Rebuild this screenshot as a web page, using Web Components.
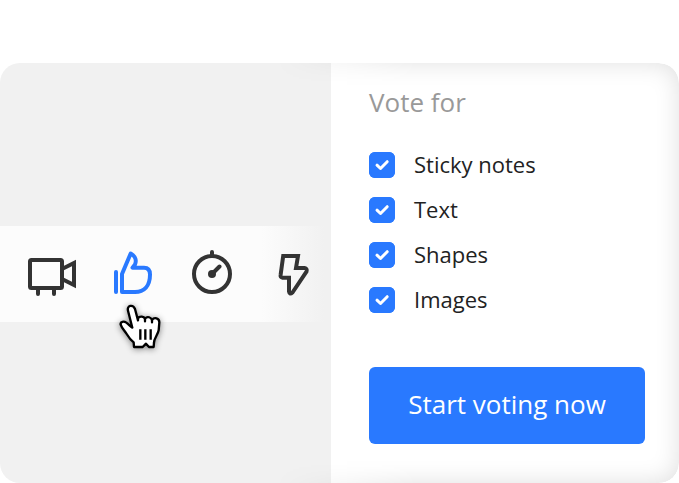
<!DOCTYPE html>
<html lang="en">
<head>
<meta charset="utf-8">
<title>Start voting</title>
<style>
body { margin: 0; background: #fff; font-family: "Open Sans", "Noto Sans", sans-serif; color: #222; }
</style>
</head>
<body>
<voting-card>
  <tool-bar slot="canvas">
    <tool-button label="Video chat">
      <svg viewBox="0 0 56 56"><rect x="6" y="14" width="32" height="28" rx="1.5"/><path d="M14 43v5M30 43v5" stroke-linecap="round"/><path d="M39 22.500L50 17V39L39 33.500"/></svg>
    </tool-button>
    <tool-button label="Voting" active>
      <svg viewBox="0 0 56 56"><path d="M12 26V46" stroke-linecap="round"/><path d="M18 46V28L26.700 7.500C32 10.500 32.500 15 31 18.500L28.500 21.700H40Q46 21.700 46 28.500C46 40 40 46 31 46Z" stroke-linejoin="round"/></svg>
      <hand-cursor slot="overlay"></hand-cursor>
    </tool-button>
    <tool-button label="Timer">
      <svg viewBox="0 0 56 56"><circle cx="28" cy="28" r="18"/><path d="M28 10V6M28 28L35.500 20.500" stroke-linecap="round"/><circle cx="28" cy="28" r="4" fill="currentColor" stroke="none"/></svg>
    </tool-button>
    <tool-button label="Quick actions">
      <svg viewBox="0 0 56 56"><path d="M19.200 10H34L32 22H40.500Q43.500 22.500 42.500 25.500L28.500 46.500Q25.500 49 25 45.500V31.700H18.500Q16.200 31.500 16.600 29Z"/></svg>
    </tool-button>
  </tool-bar>
  <vote-form slot="panel">
    <span slot="title">Vote for</span>
    <vote-option>Sticky notes</vote-option>
    <vote-option>Text</vote-option>
    <vote-option>Shapes</vote-option>
    <vote-option>Images</vote-option>
    <span slot="action">Start voting now</span>
  </vote-form>
</voting-card>
<script>
function define(name, html, setup) {
  const template = document.createElement("template");
  template.innerHTML = html;
  customElements.define(name, class extends HTMLElement {
    constructor() {
      super();
      this.attachShadow({ mode: "open" }).append(template.content.cloneNode(true));
    }
    connectedCallback() { if (setup) setup(this, this.shadowRoot); }
  });
}

define("voting-card", `
<style>
:host { display: block; padding-top: 63px; }
main { display: grid; grid-template-columns: 331fr 348fr; min-height: calc(100vh - 63px); border-radius: 20px; overflow: hidden; position: relative; }
.canvas { background: #f1f1f1; display: flex; flex-direction: column; justify-content: center; padding-top: 2px; min-width: 0; }
.panel { background: #fff; min-width: 0; }
/* soft inner shade round the panel's outer edge */
main::after { content: ""; position: absolute; inset: 0 0 0 30%; border-radius: 0 20px 20px 0; pointer-events: none;
  box-shadow: inset 0 0 24px rgba(0,0,0,.13);
  -webkit-mask-image: linear-gradient(90deg, transparent 15%, #000 45%); mask-image: linear-gradient(90deg, transparent 15%, #000 45%); }
</style>
<main><section class="canvas"><slot name="canvas"></slot></section><section class="panel"><slot name="panel"></slot></section></main>`);

define("tool-bar", `
<style>
:host { display: flex; padding-left: 12px; background: linear-gradient(90deg, #fcfcfc 79%, #f1f1f1 98%); }
</style>
<slot></slot>`);

define("tool-button", `
<style>
:host { display: block; position: relative; flex: 0 0 80px; color: #333; }
:host([active]) { color: #2979ff; z-index: 1; }
button { display: flex; align-items: center; justify-content: center; width: 100%; height: 96px; padding: 0; border: 0; background: none; color: inherit; cursor: pointer; }
::slotted(svg) { width: 56px; height: 56px; fill: none; stroke: currentColor; stroke-width: 4; flex: none; }
</style>
<button type="button"><slot></slot></button><slot name="overlay"></slot>`,
(host, root) => root.querySelector("button").setAttribute("aria-label", host.getAttribute("label")));

define("hand-cursor", `
<style>
:host { position: absolute; left: 13px; top: 64px; pointer-events: none; }
svg { display: block; width: 70px; height: 70px; overflow: visible; filter: drop-shadow(0 1px 3px rgba(0,0,0,.45)); }
</style>
<svg viewBox="0 0 210 210" fill="#fff" stroke="#000" stroke-width="7" stroke-linejoin="round" stroke-linecap="round" aria-hidden="true">
<path d="M87 171L86 157C78 151 71 142 65 132C59 122 50 114 47 104C45 94 57 93 64 98C71 103 77 111 82 113L69 62C65 46 84 42 90 57L99 91V85C104 77 118 78 120 88V94V86C127 77 139 82 141 91V97V90C148 80 163 84 163 97L161 121C158 136 147 145 147 158L146 171H132L123 161L113 171Z"/>
<path d="M106 118V149M121 118V149M137 118V149" stroke-linecap="butt"/>
</svg>`);

define("vote-form", `
<style>
:host { display: block; padding: 21px 34px 39px 38px; }
form { display: flex; flex-direction: column; }
h2 { margin: 0; font-size: 26px; line-height: 36px; font-weight: 400; color: #999; }
.options { display: flex; flex-direction: column; gap: 9px; margin: 27px 0 49px; }
button { height: 77px; padding: 0 16px 3px; border: 0; border-radius: 6px; background: #2979ff; color: #fff; font: inherit; font-size: 26px; cursor: pointer; }
</style>
<form>
<h2><slot name="title"></slot></h2>
<div class="options"><slot></slot></div>
<button type="button"><slot name="action"></slot></button>
</form>`);

define("vote-option", `
<style>
:host { display: block; }
label { display: flex; align-items: center; gap: 19px; height: 36px; font-size: 22px; line-height: 34px; color: #222; cursor: pointer; }
.text { padding-bottom: 2px; }
.box { display: grid; flex: none; width: 26px; height: 26px; }
.box > * { grid-area: 1 / 1; }
input { appearance: none; -webkit-appearance: none; width: 26px; height: 26px; margin: 0; border-radius: 6px; background: #fff; box-shadow: inset 0 0 0 2px #2979ff; cursor: pointer; }
input:checked { background: #2979ff; }
svg { width: 26px; height: 26px; pointer-events: none; fill: none; stroke: #fff; stroke-width: 3; stroke-linecap: round; stroke-linejoin: round; }
</style>
<label><span class="box"><input type="checkbox" checked><svg viewBox="0 0 26 26" aria-hidden="true"><path d="M8 13.200L11.500 16.500L18.200 9.700"/></svg></span><span class="text"><slot></slot></span></label>`);
</script>
</body>
</html>
